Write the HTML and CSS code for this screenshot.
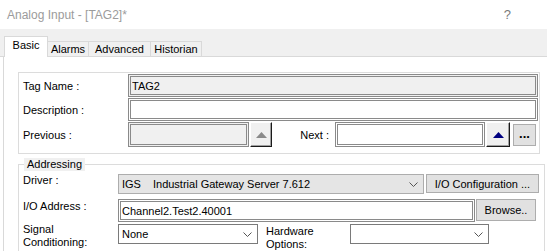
FILE: index.html
```html
<!DOCTYPE html>
<html lang="en">
<head>
    <meta charset="UTF-8">
    <meta name="viewport" content="width=device-width, initial-scale=1.0">
    <title>Analog Input - [TAG2]*</title>
    <link rel="stylesheet" href="styles.css">
</head>
<body>
    <div class="titlebar">
        <span class="title">Analog Input - [TAG2]*</span>
        <span class="help">?</span>
    </div>

    <div class="tabstrip">
        <div class="tab active">Basic</div>
        <div class="tab tab-alarms">Alarms</div>
        <div class="tab tab-advanced">Advanced</div>
        <div class="tab tab-historian">Historian</div>
    </div>

    <div class="page">
        <div class="group">
            <div class="row row-tall">
                <label class="lbl" for="tagName">Tag Name :</label>
                <input class="field field-disabled field-wide" type="text" id="tagName" value="TAG2" readonly>
            </div>
            <div class="row row-tall">
                <label class="lbl" for="description">Description :</label>
                <input class="field field-wide" type="text" id="description" value="">
            </div>
            <div class="row row-nav">
                <label class="lbl" for="previous">Previous :</label>
                <div class="nav-line">
                    <input class="field field-disabled field-prev" type="text" id="previous" readonly>
                    <button class="btn-3d btn-prev" type="button">
                        <svg width="11" height="6" viewBox="0 0 11 6"><polygon points="0,6 5.5,0 11,6" fill="#8a8a8a"/></svg>
                    </button>
                    <label class="lbl-next" for="next">Next :</label>
                    <input class="field field-next" type="text" id="next">
                    <button class="btn-3d btn-next" type="button">
                        <svg width="11" height="6" viewBox="0 0 11 6"><polygon points="0,6 5.5,0 11,6" fill="#000080"/></svg>
                    </button>
                    <button class="btn btn-dots" type="button">...</button>
                </div>
            </div>
        </div>

        <fieldset class="group group-addr">
            <legend>Addressing</legend>
            <div class="arow arow-driver">
                <span class="lbl">Driver :</span>
                <div class="select select-driver">
                    <span class="sel-text"><span class="drv-code">IGS</span>Industrial Gateway Server 7.612</span>
                    <svg class="chev" width="9" height="5" viewBox="0 0 9 5"><polyline points="0.5,0.5 4.5,4.5 8.5,0.5" fill="none" stroke="#555" stroke-width="1"/></svg>
                </div>
                <button class="btn btn-ioconf" type="button">I/O Configuration ...</button>
            </div>
            <div class="arow arow-addr">
                <label class="lbl" for="ioAddress">I/O Address :</label>
                <input class="field field-addr" type="text" id="ioAddress" value="Channel2.Test2.40001">
                <button class="btn btn-browse" type="button">Browse..</button>
            </div>
            <div class="arow arow-signal">
                <span class="lbl lbl-two">Signal<br>Conditioning:</span>
                <div class="select select-signal">
                    <span class="sel-text">None</span>
                    <svg class="chev" width="9" height="5" viewBox="0 0 9 5"><polyline points="0.5,0.5 4.5,4.5 8.5,0.5" fill="none" stroke="#555" stroke-width="1"/></svg>
                </div>
                <span class="lbl lbl-two lbl-hw">Hardware<br>Options:</span>
                <div class="select select-hw">
                    <span class="sel-text"></span>
                    <svg class="chev" width="9" height="5" viewBox="0 0 9 5"><polyline points="0.5,0.5 4.5,4.5 8.5,0.5" fill="none" stroke="#555" stroke-width="1"/></svg>
                </div>
            </div>
        </fieldset>
    </div>
</body>
</html>
```

FILE: styles.css
```css
* {
    box-sizing: border-box;
}
body {
    margin: 0;
    width: 547px;
    height: 251px;
    overflow: hidden;
    background-color: #ffffff;
    font-family: "Liberation Sans", Arial, sans-serif;
    font-size: 11px;
    color: #000;
}

/* title bar */
.titlebar {
    height: 29px;
    display: flex;
    align-items: center;
    justify-content: space-between;
    padding: 0 36px 0 7px;
}
.title {
    font-size: 12px;
    color: #9b9b9b;
}
.help {
    font-size: 13px;
    color: #7a7a7a;
}

/* tabs */
.tabstrip {
    height: 28px;
    background-color: #f0f0f0;
    border-bottom: 1px solid #d9d9d9;
    display: flex;
    align-items: flex-end;
    padding-left: 4px;
}
.tab {
    height: 15px;
    line-height: 14px;
    padding: 0;
    text-align: center;
    border: 1px solid #d9d9d9;
    border-bottom: none;
    margin-left: -1px;
    background-color: #f0f0f0;
    white-space: nowrap;
}
.tab-alarms {
    width: 42px;
}
.tab-advanced {
    width: 63px;
}
.tab-historian {
    width: 52px;
}
.tab.active {
    width: 44px;
    height: 21px;
    line-height: 17px;
    margin-left: 0;
    margin-bottom: -1px;
    background-color: #ffffff;
    position: relative;
    z-index: 1;
}

/* page */
.page {
    margin-left: 3px;
    border-left: 1px solid #d9d9d9;
    padding: 15px 0 0 14px;
    height: 200px;
}
.group {
    width: 522px;
    border: 1px solid #dcdcdc;
    padding: 1px 0 6px 4px;
}
.row {
    display: grid;
    grid-template-columns: 105px 1fr;
    align-items: center;
    margin-bottom: 1px;
}
.row-tall {
    height: 23px;
}
.row-nav {
    height: 25px;
    margin-bottom: 0;
}
.lbl {
    white-space: nowrap;
}
.field {
    height: 100%;
    border: 3px double #8a8a8a;
    font-family: inherit;
    font-size: 11px;
    padding: 0 1px;
    outline: none;
    background-color: #ffffff;
    color: #000;
}
.field-disabled {
    background-color: #f0f0f0;
}
.field-wide {
    width: 410px;
}
.nav-line {
    display: flex;
    align-items: center;
    height: 25px;
}
.field-prev {
    width: 121px;
    flex-shrink: 0;
}
.btn-3d {
    height: 25px;
    padding: 0;
    border: 1px solid;
    border-color: #ffffff #1a1a1a #1a1a1a #ffffff;
    box-shadow: inset -1px -1px 0 #a0a0a0;
    background-color: #f0f0f0;
    display: flex;
    align-items: center;
    justify-content: center;
    flex-shrink: 0;
}
.btn-prev {
    width: 22px;
    margin-left: 1px;
}
.lbl-next {
    width: 63px;
    text-align: right;
    padding-right: 6px;
    white-space: nowrap;
    flex-shrink: 0;
}
.field-next {
    width: 150px;
    flex-shrink: 0;
}
.btn-next {
    width: 24px;
    margin-left: 1px;
}
.btn {
    background-color: #e1e1e1;
    border: 1px solid #adadad;
    font-family: inherit;
    font-size: 11px;
    color: #000;
    padding: 0;
    flex-shrink: 0;
}
.btn-dots {
    width: 23px;
    height: 22px;
    margin-left: 3px;
    font-size: 13px;
    font-weight: bold;
    line-height: 14px;
    padding-bottom: 2px;
}

/* addressing group */
.group-addr {
    margin: 4px 0 0 0;
    width: 527px;
    padding: 1px 0 10px 4px;
    border: 1px solid #dcdcdc;
}
.group-addr legend {
    margin-left: 1px;
    padding: 0 3px;
    background-color: #f0f0f0;
    font-size: 11px;
    line-height: 13px;
}
.arow {
    display: flex;
    align-items: center;
}
.arow .lbl {
    width: 95px;
    flex-shrink: 0;
}
.arow-driver {
    height: 20px;
    margin-top: 2px;
}
.arow-driver .lbl {
    align-self: flex-start;
}
.arow-addr {
    height: 23px;
    margin-top: 5px;
}
.arow-addr .lbl {
    align-self: flex-start;
    padding-top: 1px;
}
.arow-signal {
    height: 20px;
    margin-top: 2px;
}
.lbl-two {
    line-height: 13px;
    padding-top: 4px;
}
.arow .lbl-hw {
    width: auto;
    margin-left: 8px;
    padding-top: 7px;
}
.select {
    height: 20px;
    display: flex;
    align-items: center;
    justify-content: space-between;
    padding: 0 5px 0 3px;
    border: 1px solid #7a7a7a;
    background-color: #ffffff;
    flex-shrink: 0;
}
.select-driver {
    width: 306px;
    background-color: #e5e5e5;
    border-color: #adadad;
}
.drv-code {
    margin-right: 12px;
}
.select-signal {
    width: 140px;
}
.select-hw {
    width: 139px;
    margin-left: 36px;
}
.btn-ioconf {
    width: 113px;
    height: 19px;
    margin-left: 2px;
    align-self: flex-start;
}
.field-addr {
    width: 357px;
    padding-left: 1px;
    flex-shrink: 0;
}
.btn-browse {
    width: 60px;
    height: 22px;
    margin-left: 1px;
    align-self: flex-start;
}
```
